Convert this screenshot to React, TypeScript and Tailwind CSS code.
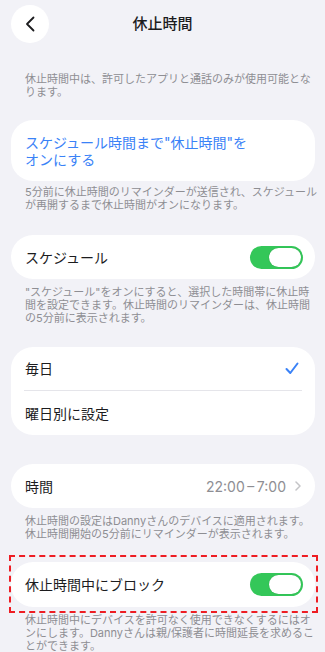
import React from 'react';

const FONT = 'font-["Inter","Noto_Sans_CJK_JP",sans-serif]';

function Toggle() {
  return (
    <div className="w-[53px] h-[23px] rounded-full bg-[#34c759] flex items-center justify-end p-[2px]">
      <div className="w-[32px] h-[19px] rounded-full bg-white shadow-[0_0_1px_rgba(0,0,0,0.25)]" />
    </div>
  );
}

function Footer({ lines, className = '' }: { lines: string[]; className?: string }) {
  return (
    <p className={`px-[14px] text-[11px] leading-[13px] text-[#8e8e93] whitespace-nowrap ${className}`}>
      {lines.map((l, i) => (
        <span key={i} className="block">{l}</span>
      ))}
    </p>
  );
}

export default function App() {
  return (
    <div className={`w-[325px] h-[652px] overflow-hidden bg-[#f2f2f7] ${FONT} text-[#1c1c1e]`}>
      <header className="pt-[5px] px-[11px] grid grid-cols-[38px_1fr_38px] items-center">
        <button className="w-[38px] h-[38px] rounded-full bg-white flex items-center justify-center">
          <svg width="10" height="16" viewBox="0 0 10 16" fill="none">
            <path d="M8.5 1.5L2 8l6.5 6.5" stroke="#1c1c1e" strokeWidth="1.8" strokeLinecap="round" strokeLinejoin="round" />
          </svg>
        </button>
        <h1 className="text-center text-[15px] font-medium">休止時間</h1>
        <div />
      </header>

      <main className="px-[11px] pr-[10px]">
        <Footer className="mt-[30px]" lines={['休止時間中は、許可したアプリと通話のみが使用可能とな', 'ります。']} />

        <div className="mt-[21px] bg-white rounded-[22px] px-[14px] pt-[14px] pb-[13px] text-[14px] leading-[17px] text-[#3a82f7] whitespace-nowrap">
          <span className="block">スケジュール時間まで"休止時間"を</span>
          <span className="block">オンにする</span>
        </div>
        <Footer className="mt-[5px]" lines={['5分前に休止時間のリマインダーが送信され、スケジュール', 'が再開するまで休止時間がオンになります。']} />

        <div className="mt-[23px] bg-white rounded-[22px] h-[44px] pl-[14px] pr-[12px] flex items-center justify-between">
          <span className="text-[14px]">スケジュール</span>
          <Toggle />
        </div>
        <Footer className="mt-[7px]" lines={['"スケジュール"をオンにすると、選択した時間帯に休止時', '間を設定できます。休止時間のリマインダーは、休止時間', 'の5分前に表示されます。']} />

        <div className="mt-[22px] bg-white rounded-[22px] px-[13px]">
          <div className="h-[44px] pl-px flex items-center justify-between border-b border-[#e5e5ea]">
            <span className="text-[14px]">毎日</span>
            <svg width="14" height="13" viewBox="0 0 14 13" fill="none" className="mr-[3px]">
              <path d="M1.5 7l3.8 4L12.5 1.5" stroke="#3a82f7" strokeWidth="2" strokeLinecap="round" strokeLinejoin="round" />
            </svg>
          </div>
          <div className="h-[44px] pl-px flex items-center">
            <span className="text-[14px]">曜日別に設定</span>
          </div>
        </div>

        <div className="mt-[29px] bg-white rounded-[22px] h-[44px] pl-[14px] pr-[14px] flex items-center justify-between">
          <span className="text-[14px]">時間</span>
          <div className="flex items-center gap-[9px]">
            <span className="text-[14px] text-[#8e8e93]">22:00{'\u2009–\u2009'}7:00</span>
            <svg width="6" height="10" viewBox="0 0 6 10" fill="none">
              <path d="M1 1l4 4-4 4" stroke="#c4c4c7" strokeWidth="1.5" strokeLinecap="round" strokeLinejoin="round" />
            </svg>
          </div>
        </div>
        <Footer className="mt-[7px]" lines={['休止時間の設定はDannyさんのデバイスに適用されます。', '休止時間開始の5分前にリマインダーが表示されます。']} />

        <div className="relative mt-[21px]">
          <div className="bg-white rounded-[22px] h-[45px] pl-[14px] pr-[12px] flex items-center justify-between">
            <span className="text-[14px]">休止時間中にブロック</span>
            <Toggle />
          </div>
          <div className="absolute -top-[7px] -bottom-[6px] -left-[2px] -right-[3px] border-2 border-dashed border-[#ee1d23] pointer-events-none" />
        </div>
        <Footer className="mt-[7px]" lines={['休止時間中にデバイスを許可なく使用できなくするにはオ', 'ンにします。Dannyさんは親/保護者に時間延長を求めるこ', 'とができます。']} />
      </main>
    </div>
  );
}
